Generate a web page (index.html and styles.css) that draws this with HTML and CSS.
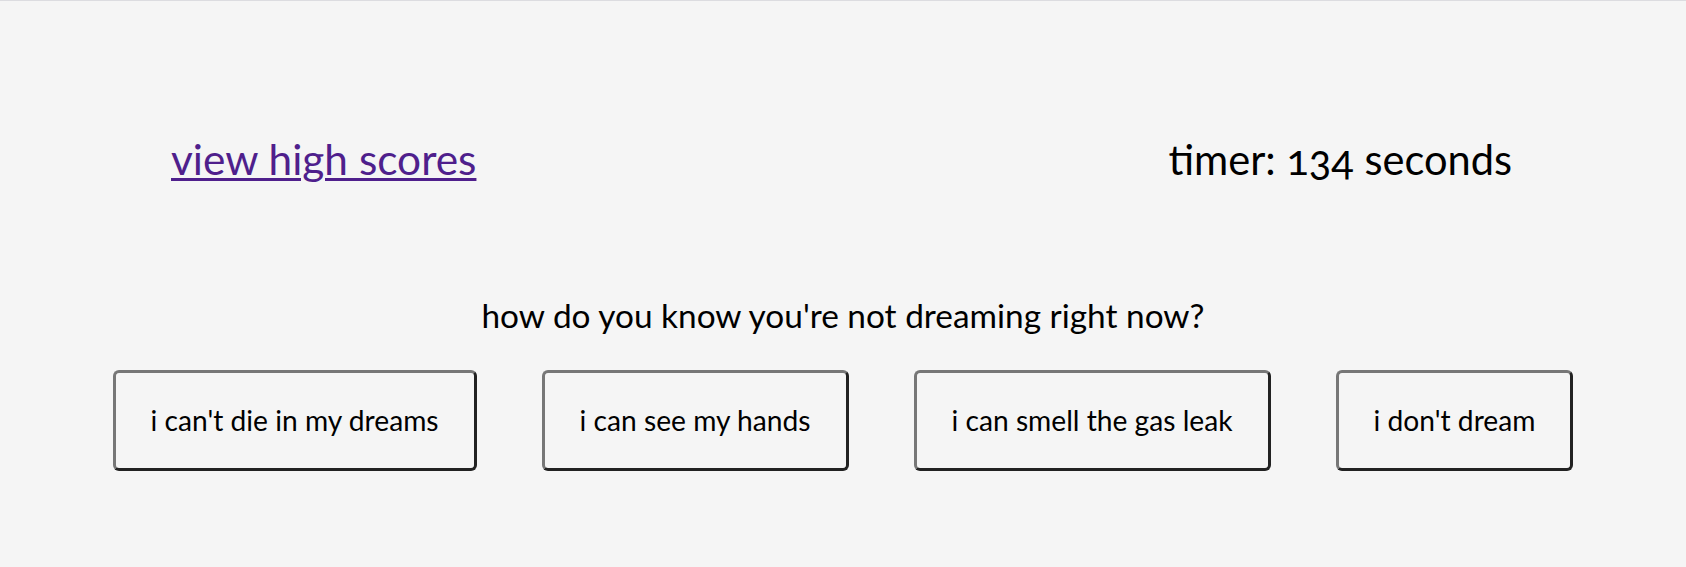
FILE: index.html
```html
<!DOCTYPE html>
<html lang="en">
<head>
<meta charset="utf-8">
<title>quiz</title>
<link rel="stylesheet" href="styles.css">
</head>
<body>
<div class="page">
  <header class="topbar">
    <a class="scores-link" href="#scores">view high scores</a>
    <div class="timer">timer: 134 seconds</div>
  </header>
  <main class="quiz">
    <p class="question">how do you know you're not dreaming right now?</p>
    <div class="choices">
      <button class="choice">i can't die in my dreams</button>
      <button class="choice">i can see my hands</button>
      <button class="choice">i can smell the gas leak</button>
      <button class="choice">i don't dream</button>
    </div>
  </main>
</div>
</body>
</html>
```
FILE: styles.css
```css
html, body {
  margin: 0;
  padding: 0;
  background: #f5f5f5;
}
body {
  font-family: Lato, "Open Sans", sans-serif;
  color: #000;
  border-top: 1px solid #dcdce0;
}
.page {
  display: flex;
  flex-direction: column;
  padding: 0 8px;
}
.topbar {
  display: flex;
  justify-content: space-between;
  align-items: baseline;
  padding: 0 166px 0 163px;
  margin-top: 133px;
  line-height: 50px;
}
.scores-link {
  font-size: 42.4px;
  color: #4f1f8c;
  text-decoration: underline;
  text-decoration-thickness: 3px;
  text-underline-offset: 3px;
}
.timer {
  font-size: 41.6px;
  font-variant-numeric: oldstyle-nums;
}
.quiz {
  display: flex;
  flex-direction: column;
  align-items: center;
  margin-top: 111px;
}
.question {
  margin: 0;
  font-size: 33.4px;
  line-height: 40px;
}
.choices {
  display: flex;
  justify-content: center;
  gap: 65px;
  margin-top: 35px;
}
.choice {
  font-family: Lato, "Open Sans", sans-serif;
  font-size: 28.2px;
  line-height: 33px;
  color: #000;
  background: #f5f5f5;
  border-style: solid;
  border-width: 3px;
  border-color: #777 #222 #222 #777;
  border-radius: 6px;
  padding: 31px 35px;
  cursor: pointer;
}
```
